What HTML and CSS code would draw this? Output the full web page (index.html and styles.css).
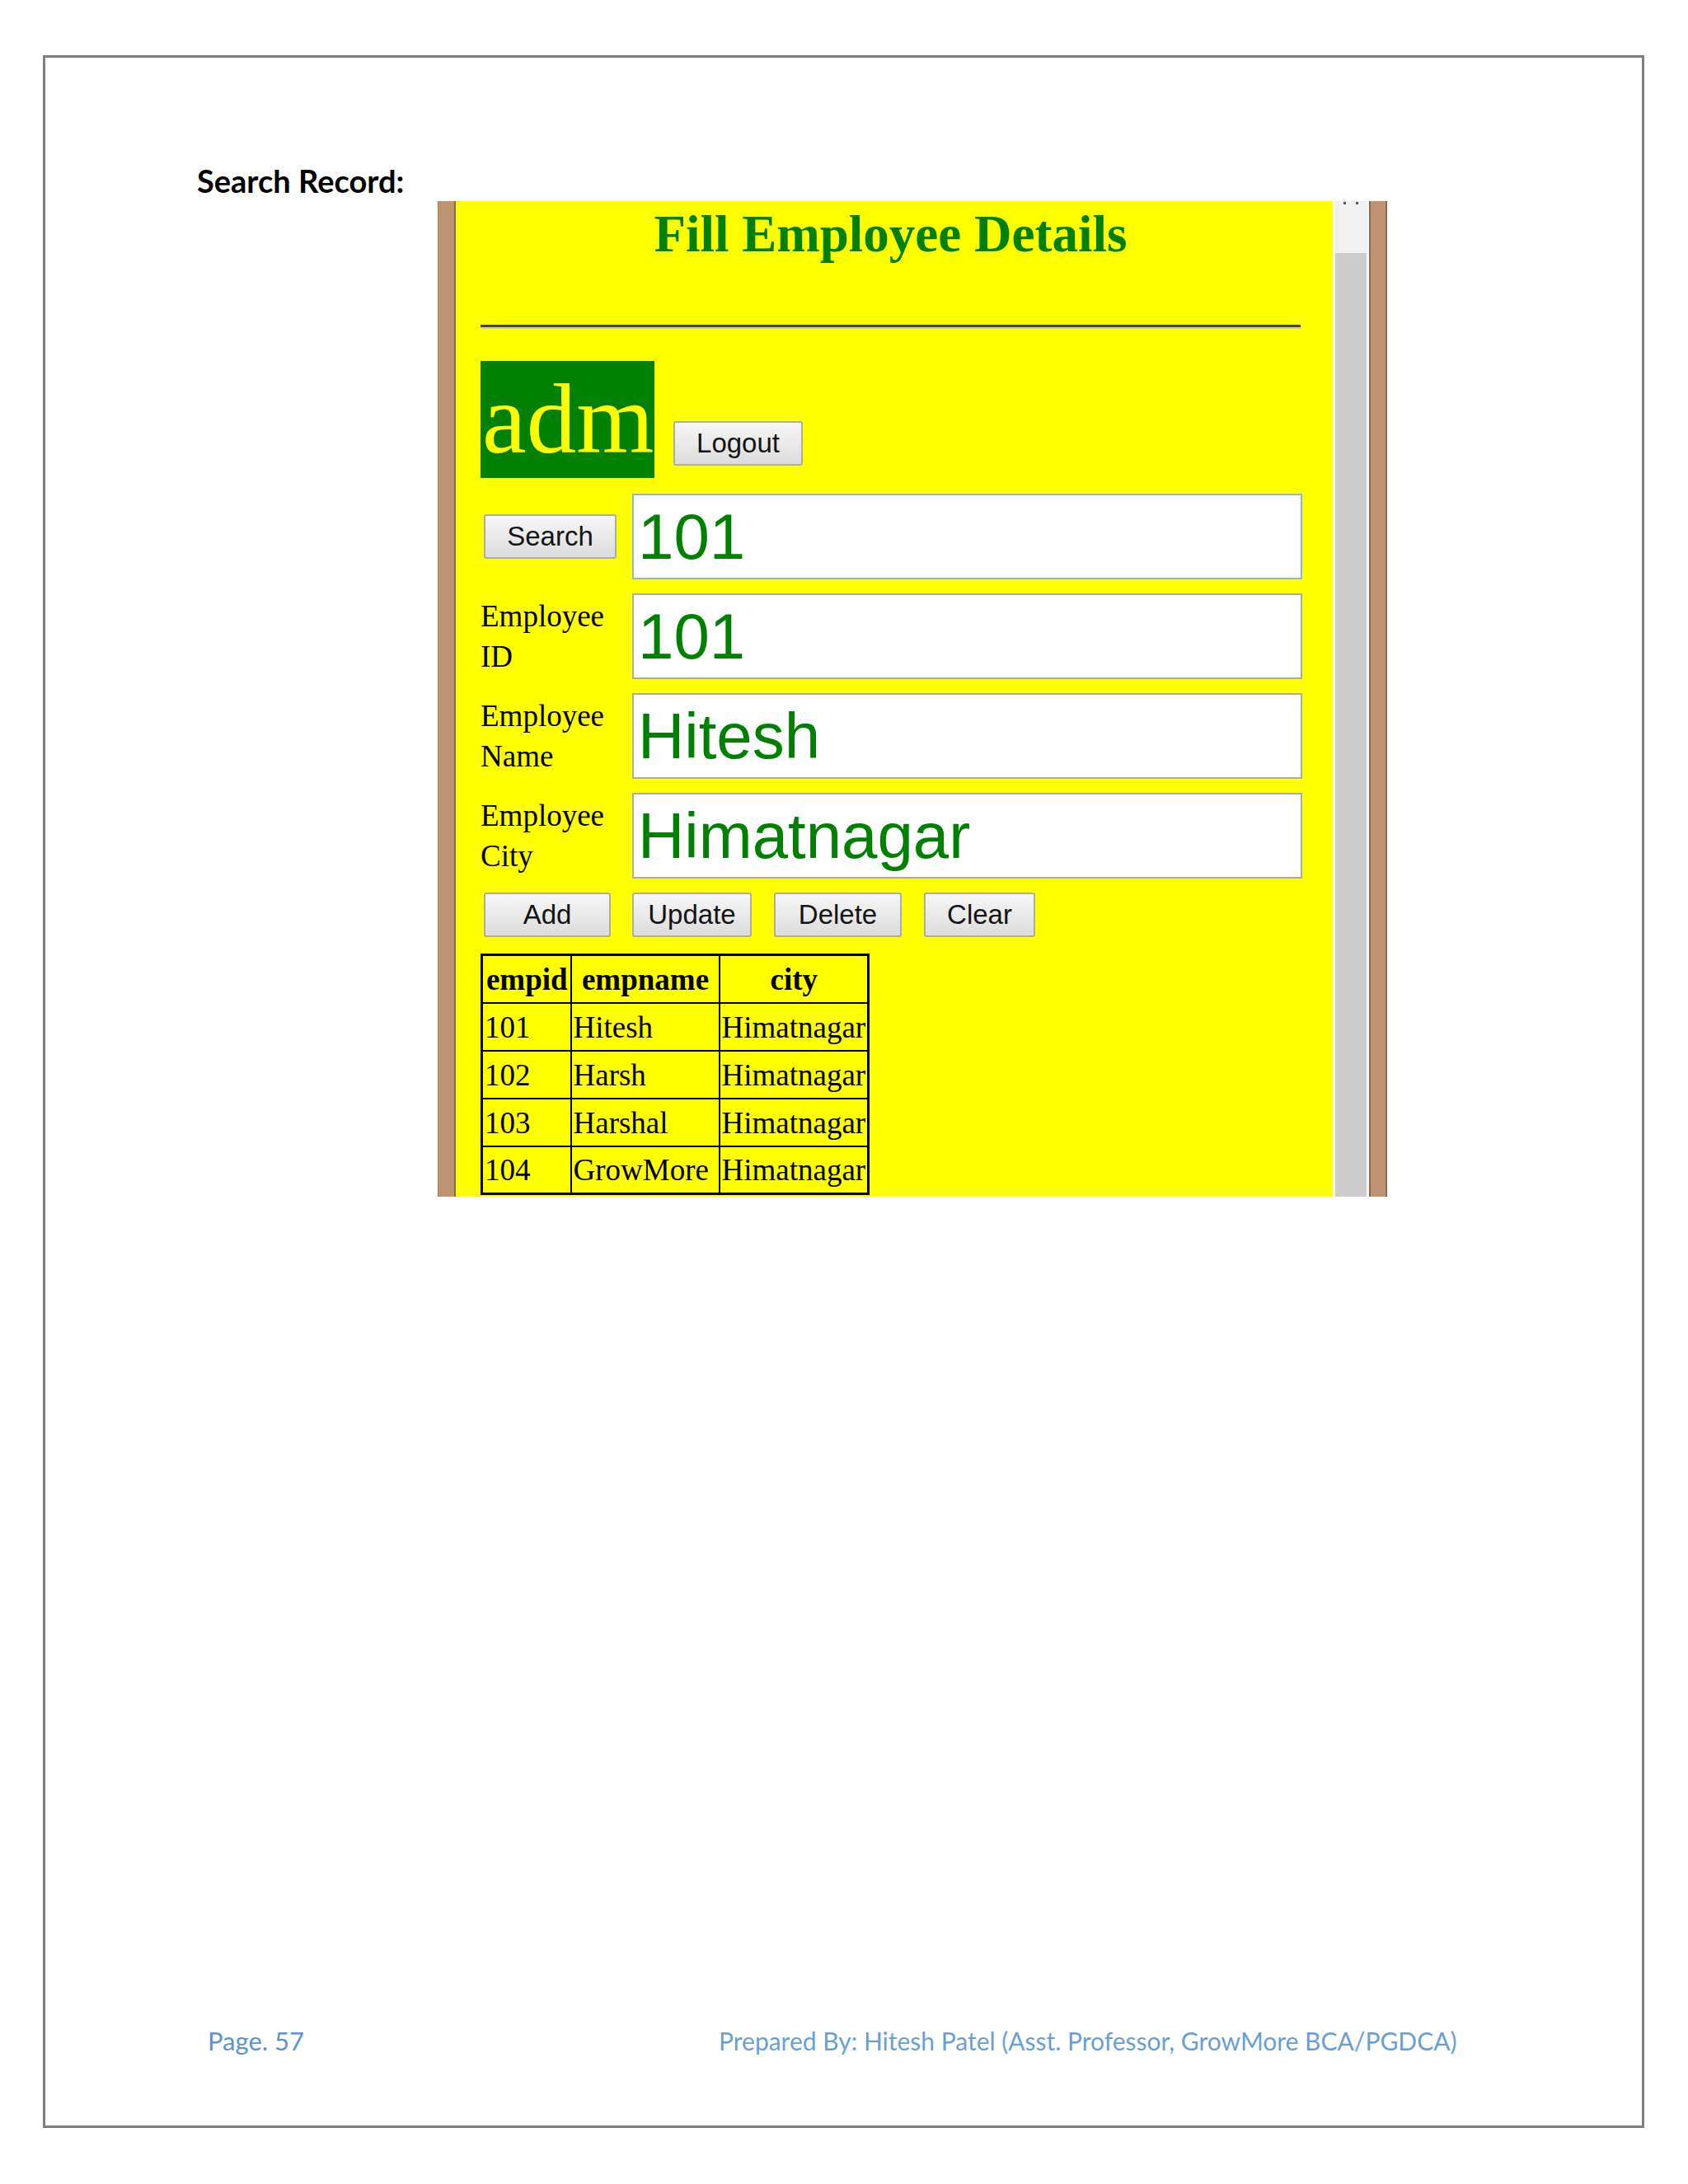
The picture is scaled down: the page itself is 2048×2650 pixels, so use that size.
FILE: index.html
```html
<!DOCTYPE html>
<html>
<head>
<meta charset="utf-8">
<title>Search Record</title>
<link rel="stylesheet" href="styles.css">
</head>
<body>
<div class="page">
  <h2 class="section-title">Search Record:</h2>
  <div class="shot">
    <div class="edge edge-left"></div>
    <div class="viewport">
      <h1 class="form-title">Fill Employee Details</h1>
      <hr class="rule">
      <div class="user-row">
        <div class="user-badge">adm</div>
        <button class="btn btn-logout">Logout</button>
      </div>
      <div class="form-grid">
        <div class="cell-label"><button class="btn btn-search">Search</button></div>
        <input class="field field-focus" type="text" value="101">
        <label class="cell-label">Employee ID</label>
        <input class="field" type="text" value="101">
        <label class="cell-label">Employee Name</label>
        <input class="field" type="text" value="Hitesh">
        <label class="cell-label">Employee City</label>
        <input class="field" type="text" value="Himatnagar">
        <div class="cell-label"><button class="btn btn-add">Add</button></div>
        <div class="actions">
          <button class="btn btn-update">Update</button>
          <button class="btn btn-delete">Delete</button>
          <button class="btn btn-clear">Clear</button>
        </div>
      </div>
      <table class="records">
        <colgroup><col class="c1"><col class="c2"><col class="c3"></colgroup>
        <tr><th>empid</th><th>empname</th><th>city</th></tr>
        <tr><td>101</td><td>Hitesh</td><td>Himatnagar</td></tr>
        <tr><td>102</td><td>Harsh</td><td>Himatnagar</td></tr>
        <tr><td>103</td><td>Harshal</td><td>Himatnagar</td></tr>
        <tr><td>104</td><td>GrowMore</td><td>Himatnagar</td></tr>
      </table>
    </div>
    <div class="scrollbar">
      <div class="dots"><span class="dot"></span><span class="dot"></span></div>
      <div class="thumb"></div>
    </div>
    <div class="edge edge-right"></div>
  </div>
  <footer class="footer">
    <span class="page-no">Page. 57</span>
    <span class="credit">Prepared By: Hitesh Patel (Asst. Professor, GrowMore BCA/PGDCA)</span>
  </footer>
</div>
</body>
</html>
```
FILE: styles.css
```css
html, body {
  margin: 0;
  padding: 0;
  background: #ffffff;
}

.page {
  box-sizing: border-box;
  width: 1943px;
  height: 2515px;
  margin: 67px 0 0 52px;
  border: 3px solid #7f7f7f;
  display: flex;
  flex-direction: column;
}

.section-title {
  margin: 127px 0 0 184px;
  font-family: Lato, "Liberation Sans", sans-serif;
  font-weight: 700;
  font-size: 38px;
  line-height: 44px;
  color: #000;
}

.shot {
  display: flex;
  margin: 3px 0 0 476px;
  width: 1152px;
  height: 1208px;
}

.edge {
  box-sizing: border-box;
  width: 22px;
  background: #bf9272;
}

.edge-left {
  border-left: 1px solid #a57a5c;
  border-right: 2px solid #8a6a52;
}

.edge-right {
  border-left: 2px solid #8a6a52;
  border-right: 2px solid #8a6a52;
}

.viewport {
  box-sizing: border-box;
  width: 1064px;
  background: #ffff00;
  overflow: hidden;
  padding: 4px 0 0 30px;
}

.form-title {
  width: 995px;
  margin: 0;
  text-align: center;
  font-family: "Liberation Serif", serif;
  font-weight: 700;
  font-size: 63px;
  line-height: 72px;
  color: #008000;
}

.rule {
  width: 995px;
  margin: 74px 0 0 0;
  height: 0;
  border: 0;
  border-top: 3px solid #45453a;
  border-bottom: 2px solid #cfcfc0;
}

.user-row {
  display: flex;
  align-items: flex-start;
  margin-top: 39px;
}

.user-badge {
  width: 211px;
  height: 142px;
  overflow: hidden;
  box-sizing: border-box;
  padding-left: 2px;
  background: #008000;
  color: #ffff00;
  font-family: "Liberation Serif", serif;
  font-size: 121px;
  line-height: 140px;
  white-space: nowrap;
}

.btn {
  box-sizing: border-box;
  height: 54px;
  padding: 0;
  border: 2px solid #acacac;
  border-radius: 3px;
  background: linear-gradient(#f7f7f7, #dcdcdc);
  font-family: "Liberation Sans", Arial, sans-serif;
  font-size: 33px;
  color: #141414;
  text-align: center;
}

.btn-logout {
  width: 157px;
  margin: 73px 0 0 23px;
}

.form-grid {
  display: grid;
  grid-template-columns: 184px 813px;
  grid-template-rows: repeat(4, 104px) 54px;
  row-gap: 17px;
  margin-top: 19px;
}

.cell-label {
  align-self: center;
  font-family: "Liberation Serif", serif;
  font-size: 37px;
  line-height: 49px;
  color: #000;
}

.btn-search {
  width: 161px;
  margin-left: 4px;
  display: block;
}

.btn-add {
  width: 154px;
  margin-left: 4px;
  display: block;
}

.field {
  box-sizing: border-box;
  width: 813px;
  height: 104px;
  margin: 0;
  padding: 0 5px;
  border: 2px solid #ababab;
  background: #ffffff;
  font-family: "Liberation Sans", Arial, sans-serif;
  font-size: 78px;
  color: #008000;
  outline: none;
}

.field-focus {
  border-color: #8bb6e2;
}

.actions {
  display: flex;
  gap: 27px;
}

.btn-update { width: 145px; }
.btn-delete { width: 155px; }
.btn-clear { width: 135px; }

.records {
  margin-top: 20px;
  border-collapse: collapse;
  table-layout: fixed;
  width: 469px;
  border: 3px solid #000;
  font-family: "Liberation Serif", serif;
  font-size: 37px;
  color: #000;
}

.records .c1 { width: 108px; }
.records .c2 { width: 180px; }
.records .c3 { width: 181px; }

.records tr {
  height: 58px;
}

.records th,
.records td {
  border: 2px solid #000;
  padding: 2px 1px 0 2px;
  line-height: 42px;
  white-space: nowrap;
  overflow: hidden;
  vertical-align: middle;
}

.records th {
  font-weight: 700;
  text-align: center;
}

.records td {
  text-align: left;
}

.scrollbar {
  box-sizing: border-box;
  width: 44px;
  padding: 0 3px;
  background: #f7f7f7;
  display: flex;
  flex-direction: column;
}

.dots {
  height: 63px;
  background: #f0f0f0;
  display: flex;
  justify-content: center;
  gap: 12px;
  padding-top: 1px;
  box-sizing: border-box;
}

.dot {
  width: 3px;
  height: 3px;
  background: #555;
}

.thumb {
  flex: 1;
  background: #cdcdcd;
}

.footer {
  margin: auto 0 84px 197px;
  display: grid;
  grid-template-columns: 620px auto;
  align-items: baseline;
  font-family: Lato, "Liberation Sans", sans-serif;
  font-size: 31px;
  line-height: 37px;
  color: #5b93cd;
}

.credit {
  font-size: 30px;
  color: #6a9fd6;
}
```
